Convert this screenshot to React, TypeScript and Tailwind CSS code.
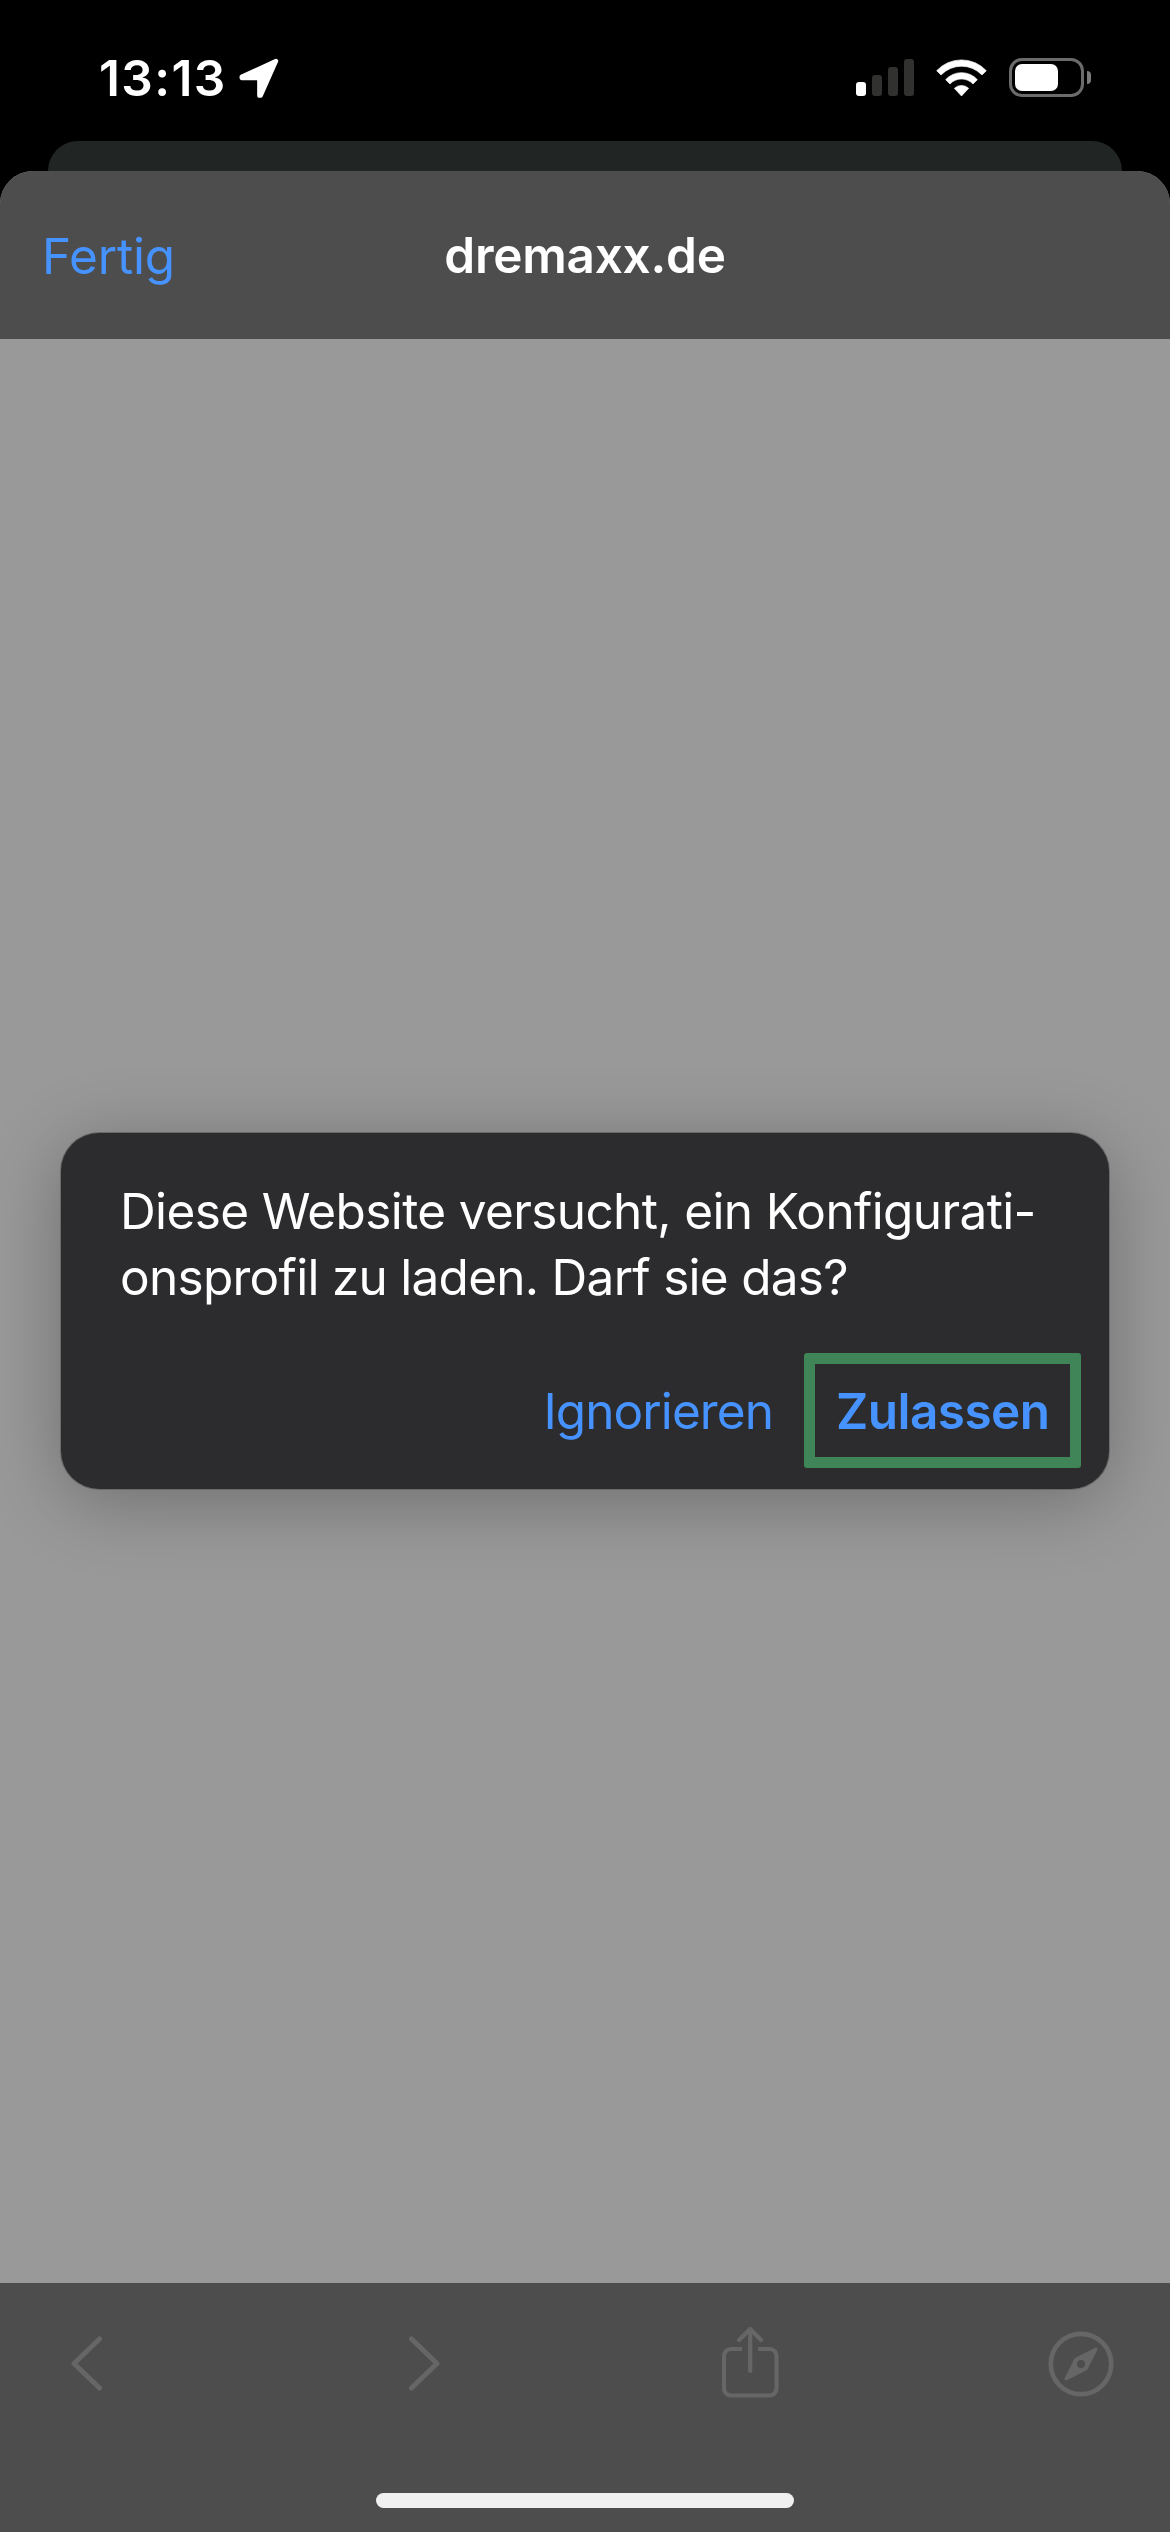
function LocationIcon() {
  return (
    <svg className="ml-4 h-[40px] w-[40px] shrink-0" viewBox="0 0 120 120" fill="#fff" stroke="#fff" strokeWidth="13" strokeLinejoin="round">
      <path d="M111 9 L8 56 L8 60 L61 60 L61 113 L65 113 Z" />
    </svg>
  );
}

function SignalIcon() {
  return (
    <div className="flex h-[37px] items-end gap-[6px]">
      <div className="h-[14px] w-[10px] rounded-[3px] bg-white" />
      <div className="h-[21px] w-[10px] rounded-[3px] bg-[#31322f]" />
      <div className="h-[29px] w-[10px] rounded-[3px] bg-[#31322f]" />
      <div className="h-[37px] w-[10px] rounded-[3px] bg-[#31322f]" />
    </div>
  );
}

function WifiIcon() {
  return (
    <svg className="ml-[22px] h-[38px] w-[51px] shrink-0" viewBox="0 0 153 114" fill="#fff" stroke="#fff" strokeWidth="2" strokeLinejoin="round">
      <path d="M2 35 A102 102 0 0 1 151 35 L138 48 A85 85 0 0 0 15 48 Z" />
      <path d="M29 62 A64 64 0 0 1 124 62 L111 75 A47 47 0 0 0 42 75 Z" />
      <path d="M55 88 A31 31 0 0 1 98 88 L76.500 111 Z" />
    </svg>
  );
}

function BatteryIcon() {
  return (
    <div className="ml-[22px] flex items-center gap-[3px]">
      <div className="h-[39px] w-[75px] rounded-[13px] border-[3px] border-[#6b6b6b] p-[3px]">
        <div className="h-[27px] w-[43px] rounded-[7px] bg-white" />
      </div>
      <div className="h-[13px] w-[4px] rounded-r-full bg-[#7b7b7b]" />
    </div>
  );
}

function Chevron({ flip = false }: { flip?: boolean }) {
  return (
    <svg className={flip ? "ml-[307px] h-[55px] w-[31px] -scale-x-100" : "h-[55px] w-[31px]"} viewBox="0 0 31 55" fill="none" stroke="#666" strokeWidth="5" strokeLinecap="round" strokeLinejoin="round">
      <path d="M28.500 3 L3 27.500 L28.500 52" />
    </svg>
  );
}

function ShareIcon() {
  return (
    <svg className="mb-[3px] ml-[282px] h-[72px] w-[57px]" viewBox="0 0 57 72" fill="none" stroke="#666" strokeWidth="4.200" strokeLinejoin="round">
      <path d="M20 23 H9 A7 7 0 0 0 2 30 V62 A7 7 0 0 0 9 69.500 H47.500 A7 7 0 0 0 54.500 62 V30 A7 7 0 0 0 47.500 23 H36" />
      <path d="M28.200 3 V45 M17 14 L28.200 3 L39 14" strokeLinecap="round" />
    </svg>
  );
}

function CompassIcon() {
  return (
    <svg className="ml-[268.500px] h-[66px] w-[66px]" viewBox="0 0 66 66">
      <circle cx="33" cy="33" r="30.200" fill="none" stroke="#666" strokeWidth="4.700" />
      <path d="M48 18 L28 28 L18 48 L38 38 Z" fill="#666" stroke="#666" strokeWidth="3" strokeLinejoin="round" />
      <circle cx="33" cy="33" r="4" fill="#4d4d4d" />
    </svg>
  );
}

function StatusBar() {
  return (
    <div className="flex h-[141px] items-start justify-between pl-[99px] pr-[79px]">
      <div className="flex items-center pt-[48px]">
        <span className="w-[124px] whitespace-nowrap font-semibold leading-[60px] tracking-[1.4px] text-white">13:13</span>
        <LocationIcon />
      </div>
      <div className="flex items-center pt-[58px]">
        <SignalIcon />
        <WifiIcon />
        <BatteryIcon />
      </div>
    </div>
  );
}

function Alert() {
  return (
    <div className="h-[356px] w-[1048px] rounded-[38px] bg-[#2c2c2e] shadow-[0_0_0_1px_#6a6a6a,0_12px_75px_rgba(0,0,0,0.28)]">
      <p className="whitespace-nowrap pl-[59px] pt-[45px] leading-[66px] text-white">
        <span className="block tracking-[-0.625px]">Diese Website versucht, ein Konfigurati-</span>
        <span className="block tracking-[-0.72px]">onsprofil zu laden. Darf sie das?</span>
      </p>
      <div className="mt-[43px] flex h-[115px] items-center justify-end pr-[28px] text-[#4693ff]">
        <button className="mr-[31px] leading-[60px] tracking-[-0.92px]">Ignorieren</button>
        <button className="h-[115px] w-[277px] whitespace-nowrap rounded-[3px] border-[11px] border-[#408558] pl-[21px] text-left font-semibold leading-[60px] tracking-[-0.55px]">
          Zulassen
        </button>
      </div>
    </div>
  );
}

export default function App() {
  return (
    <div className="flex h-[2532px] w-[1170px] flex-col overflow-hidden bg-black font-['Inter',sans-serif] text-[49.5px]">
      <StatusBar />
      <div className="mx-[48px] h-[60px] shrink-0 rounded-t-[30px] bg-[#212624]" />
      <div className="relative -mt-[30px] flex grow flex-col overflow-hidden rounded-t-[33px] bg-[#999]">
        <header className="grid h-[168px] shrink-0 grid-cols-[1fr_auto_1fr] items-start bg-[#4d4d4d]">
          <button className="justify-self-start pl-[42px] pt-[55px] leading-[60px] tracking-[-0.2px] text-[#4693ff]">Fertig</button>
          <h1 className="pt-[54px] font-semibold leading-[60px] tracking-[-0.27px] text-white">dremaxx.de</h1>
        </header>
        <main className="flex h-[1944px] shrink-0 justify-center pt-[794px]">
          <Alert />
        </main>
        <footer className="flex grow flex-col bg-[#4d4d4d]">
          <div className="flex h-[161px] items-center pl-[71px]">
            <Chevron />
            <Chevron flip />
            <ShareIcon />
            <CompassIcon />
          </div>
          <div className="mt-[49px] h-[15px] w-[418px] self-center rounded-full bg-[#f0f0f0]" />
        </footer>
      </div>
    </div>
  );
}
